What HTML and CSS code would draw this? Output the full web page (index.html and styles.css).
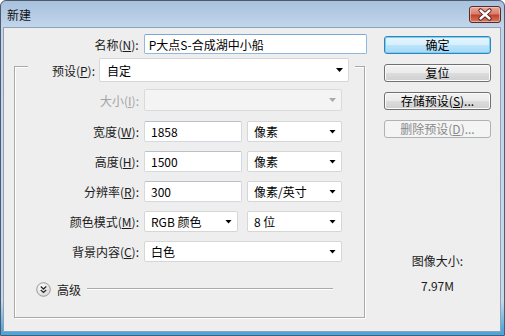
FILE: index.html
```html
<!DOCTYPE html>
<html lang="zh-CN">
<head>
    <meta charset="UTF-8">
    <title>新建</title>
    <link rel="stylesheet" href="styles.css">
</head>
<body>
    <div class="window">
        <div class="titlebar">
            <span class="title">新建</span>
            <div class="close">
                <svg width="32" height="17" viewBox="0 0 32 17">
                    <path d="M11.5 4.5 L20.5 12.5 M20.5 4.5 L11.5 12.5" stroke="#4a1410" stroke-width="4.2" stroke-linecap="round"/>
                    <path d="M11.5 4.5 L20.5 12.5 M20.5 4.5 L11.5 12.5" stroke="#ffffff" stroke-width="2.4" stroke-linecap="round"/>
                </svg>
            </div>
        </div>
        <div class="client">
            <div class="form">
                <div class="row name-row">
                    <label class="lbl">名称(<u>N</u>):</label>
                    <div class="field name">P大点S-合成湖中小船</div>
                </div>
                <div class="group">
                    <div class="preset-row">
                        <label class="lbl">预设(<u>P</u>):</label>
                        <div class="field combo preset">自定<span class="arrow"></span></div>
                    </div>
                    <div class="row size-row disabled">
                        <label class="lbl">大小(<u>I</u>):</label>
                        <div class="field combo wide"><span class="arrow"></span></div>
                    </div>
                    <div class="row">
                        <label class="lbl">宽度(<u>W</u>):</label>
                        <div class="field num">1858</div>
                        <div class="field combo unit">像素<span class="arrow"></span></div>
                    </div>
                    <div class="row">
                        <label class="lbl">高度(<u>H</u>):</label>
                        <div class="field num">1500</div>
                        <div class="field combo unit">像素<span class="arrow"></span></div>
                    </div>
                    <div class="row">
                        <label class="lbl">分辨率(<u>R</u>):</label>
                        <div class="field num">300</div>
                        <div class="field combo unit">像素/英寸<span class="arrow"></span></div>
                    </div>
                    <div class="row">
                        <label class="lbl">颜色模式(<u>M</u>):</label>
                        <div class="field combo mode">RGB 颜色<span class="arrow"></span></div>
                        <div class="field combo unit">8 位<span class="arrow"></span></div>
                    </div>
                    <div class="row">
                        <label class="lbl">背景内容(<u>C</u>):</label>
                        <div class="field combo wide">白色<span class="arrow"></span></div>
                    </div>
                    <div class="advanced">
                        <svg class="chevron" width="15" height="15" viewBox="0 0 15 15">
                            <defs>
                                <radialGradient id="knob" cx="0.4" cy="0.35" r="0.7">
                                    <stop offset="0" stop-color="#ffffff"/>
                                    <stop offset="1" stop-color="#d6d6d6"/>
                                </radialGradient>
                            </defs>
                            <circle cx="7.5" cy="7.5" r="6.8" fill="url(#knob)" stroke="#9a9a9a"/>
                            <path d="M4.8 4.6 L7.5 7 L10.2 4.6 M4.8 8 L7.5 10.4 L10.2 8" fill="none" stroke="#2a2a2a" stroke-width="1.4"/>
                        </svg>
                        <span class="adv-label">高级</span>
                        <span class="rule"></span>
                    </div>
                </div>
            </div>
            <div class="side">
                <button class="btn default">确定</button>
                <button class="btn">复位</button>
                <button class="btn">存储预设(<u>S</u>)...</button>
                <button class="btn" disabled>删除预设(<u>D</u>)...</button>
                <div class="info">
                    <div>图像大小:</div>
                    <div>7.97M</div>
                </div>
            </div>
        </div>
    </div>
</body>
</html>
```

FILE: styles.css
```css
*,
*:before,
*:after {
    padding: 0;
    margin: 0;
    box-sizing: border-box;
}

body {
    width: 505px;
    height: 336px;
    overflow: hidden;
    font-family: "Noto Sans CJK SC", "Noto Sans", sans-serif;
    font-size: 12px;
    color: #1b1b1b;
    background-color: #ffffff;
}

u {
    text-decoration: underline;
    text-underline-offset: 1px;
}

.window {
    width: 505px;
    height: 336px;
    display: flex;
    flex-direction: column;
    border: 1px solid #4d5b6c;
    border-radius: 6px 6px 0 0;
    padding: 0 3px 3px 2px;
    background: linear-gradient(to bottom, #a8c1de 0, #c2d5eb 26px, #c6d8ec 300px, #49a7de 330px);
}

.titlebar {
    height: 26px;
    display: flex;
    align-items: center;
    justify-content: space-between;
    padding-left: 4px;
}

.title {
    font-size: 12px;
    color: #111111;
}

.close {
    width: 32px;
    height: 17px;
    border: 1px solid #5a2a24;
    border-radius: 3px;
    background: linear-gradient(to bottom, #e8a89c 0%, #d8806f 45%, #c3422c 55%, #d27b5e 100%);
    box-shadow: inset 0 0 0 1px rgba(255, 220, 210, 0.5);
    display: flex;
    align-items: center;
    justify-content: center;
}

.close svg {
    display: block;
    margin: -1px;
}

.client {
    flex: 1;
    display: flex;
    background-color: #eeeeee;
    border: 1px solid #8ea3ba;
}

/* left side: fields */
.form {
    width: 363px;
    padding-top: 6px;
}

.row {
    display: flex;
    align-items: center;
    height: 21px;
    margin-top: 9px;
}

.lbl {
    width: 124px;
    margin-right: 5px;
    text-align: right;
    white-space: nowrap;
}

.name-row {
    height: 20px;
    margin-top: 0;
}

.name-row .lbl {
    width: 135px;
}

.field {
    height: 100%;
    display: flex;
    align-items: center;
    padding-left: 6px;
    background-color: #ffffff;
    border: 1px solid #d3d9e1;
    border-top-color: #b9c0ca;
    border-radius: 2px;
    color: #000000;
    white-space: nowrap;
}

.name {
    width: 224px;
    padding-left: 4px;
    border-color: #8fb8e0;
    border-top-color: #7aa7d4;
}

.combo {
    position: relative;
    border-color: #d6d6d6;
}

.arrow {
    position: absolute;
    right: 5px;
    top: 50%;
    width: 7px;
    height: 4px;
    margin-top: -2px;
    background-color: #000000;
    clip-path: polygon(0 0, 100% 0, 50% 100%);
}

.group {
    width: 351px;
    margin: 12px 0 0 10px;
    padding-bottom: 20px;
    border: 1px solid #a9a9a9;
    box-shadow: inset 1px 1px 0 #ffffff, 1px 1px 0 #ffffff;
}

.preset-row {
    display: flex;
    align-items: center;
    height: 24px;
    margin: -9px 9px 0 13px;
    padding-right: 6px;
    background-color: #eeeeee;
}

.preset-row .lbl {
    width: 67px;
    margin-right: 4px;
}

.preset {
    width: 250px;
    padding-left: 7px;
}

.size-row {
    height: 22px;
    margin-top: 7px;
}

.size-row + .row {
    margin-top: 10px;
}

.disabled .lbl {
    color: #a3a3a3;
}

.disabled .field {
    background-color: #f4f4f4;
    border-color: #dadada;
}

.disabled .arrow {
    background-color: #a9a9a9;
}

.wide {
    width: 198px;
}

.num {
    width: 98px;
    margin-right: 5px;
}

.unit {
    width: 95px;
}

.mode {
    width: 94px;
    margin-right: 9px;
}

.advanced {
    display: flex;
    align-items: center;
    height: 16px;
    margin: 19px 31px 0 21px;
}

.chevron {
    display: block;
}

.adv-label {
    margin-left: 6px;
}

.rule {
    flex: 1;
    height: 2px;
    margin-left: 6px;
    border-top: 1px solid #a9a9a9;
    border-bottom: 1px solid #ffffff;
}

/* right side: buttons */
.side {
    width: 107px;
    margin-left: 17px;
    padding-top: 8px;
    display: flex;
    flex-direction: column;
}

.btn {
    height: 18px;
    width: 107px;
    margin-bottom: 10px;
    font-family: inherit;
    font-size: 12px;
    line-height: 14px;
    color: #000000;
    border: 1px solid #707070;
    border-radius: 3px;
    background: linear-gradient(to bottom, #f2f2f2 0%, #ebebeb 50%, #dddddd 50%, #cfcfcf 100%);
    box-shadow: inset 0 0 0 1px #fcfcfc;
}

.btn.default {
    border-color: #3c7fb1;
    background: linear-gradient(to bottom, #e6f5fd 0%, #d6effc 50%, #bde5fc 50%, #a6d8f4 100%);
    box-shadow: inset 0 0 0 1px #6fd4fa;
}

.btn:disabled {
    color: #8a8a8a;
    border-color: #adb2b5;
    background: #f4f4f4;
    box-shadow: none;
}

.info {
    margin-top: 100px;
    text-align: center;
    line-height: 25px;
    color: #1b1b1b;
}
```
